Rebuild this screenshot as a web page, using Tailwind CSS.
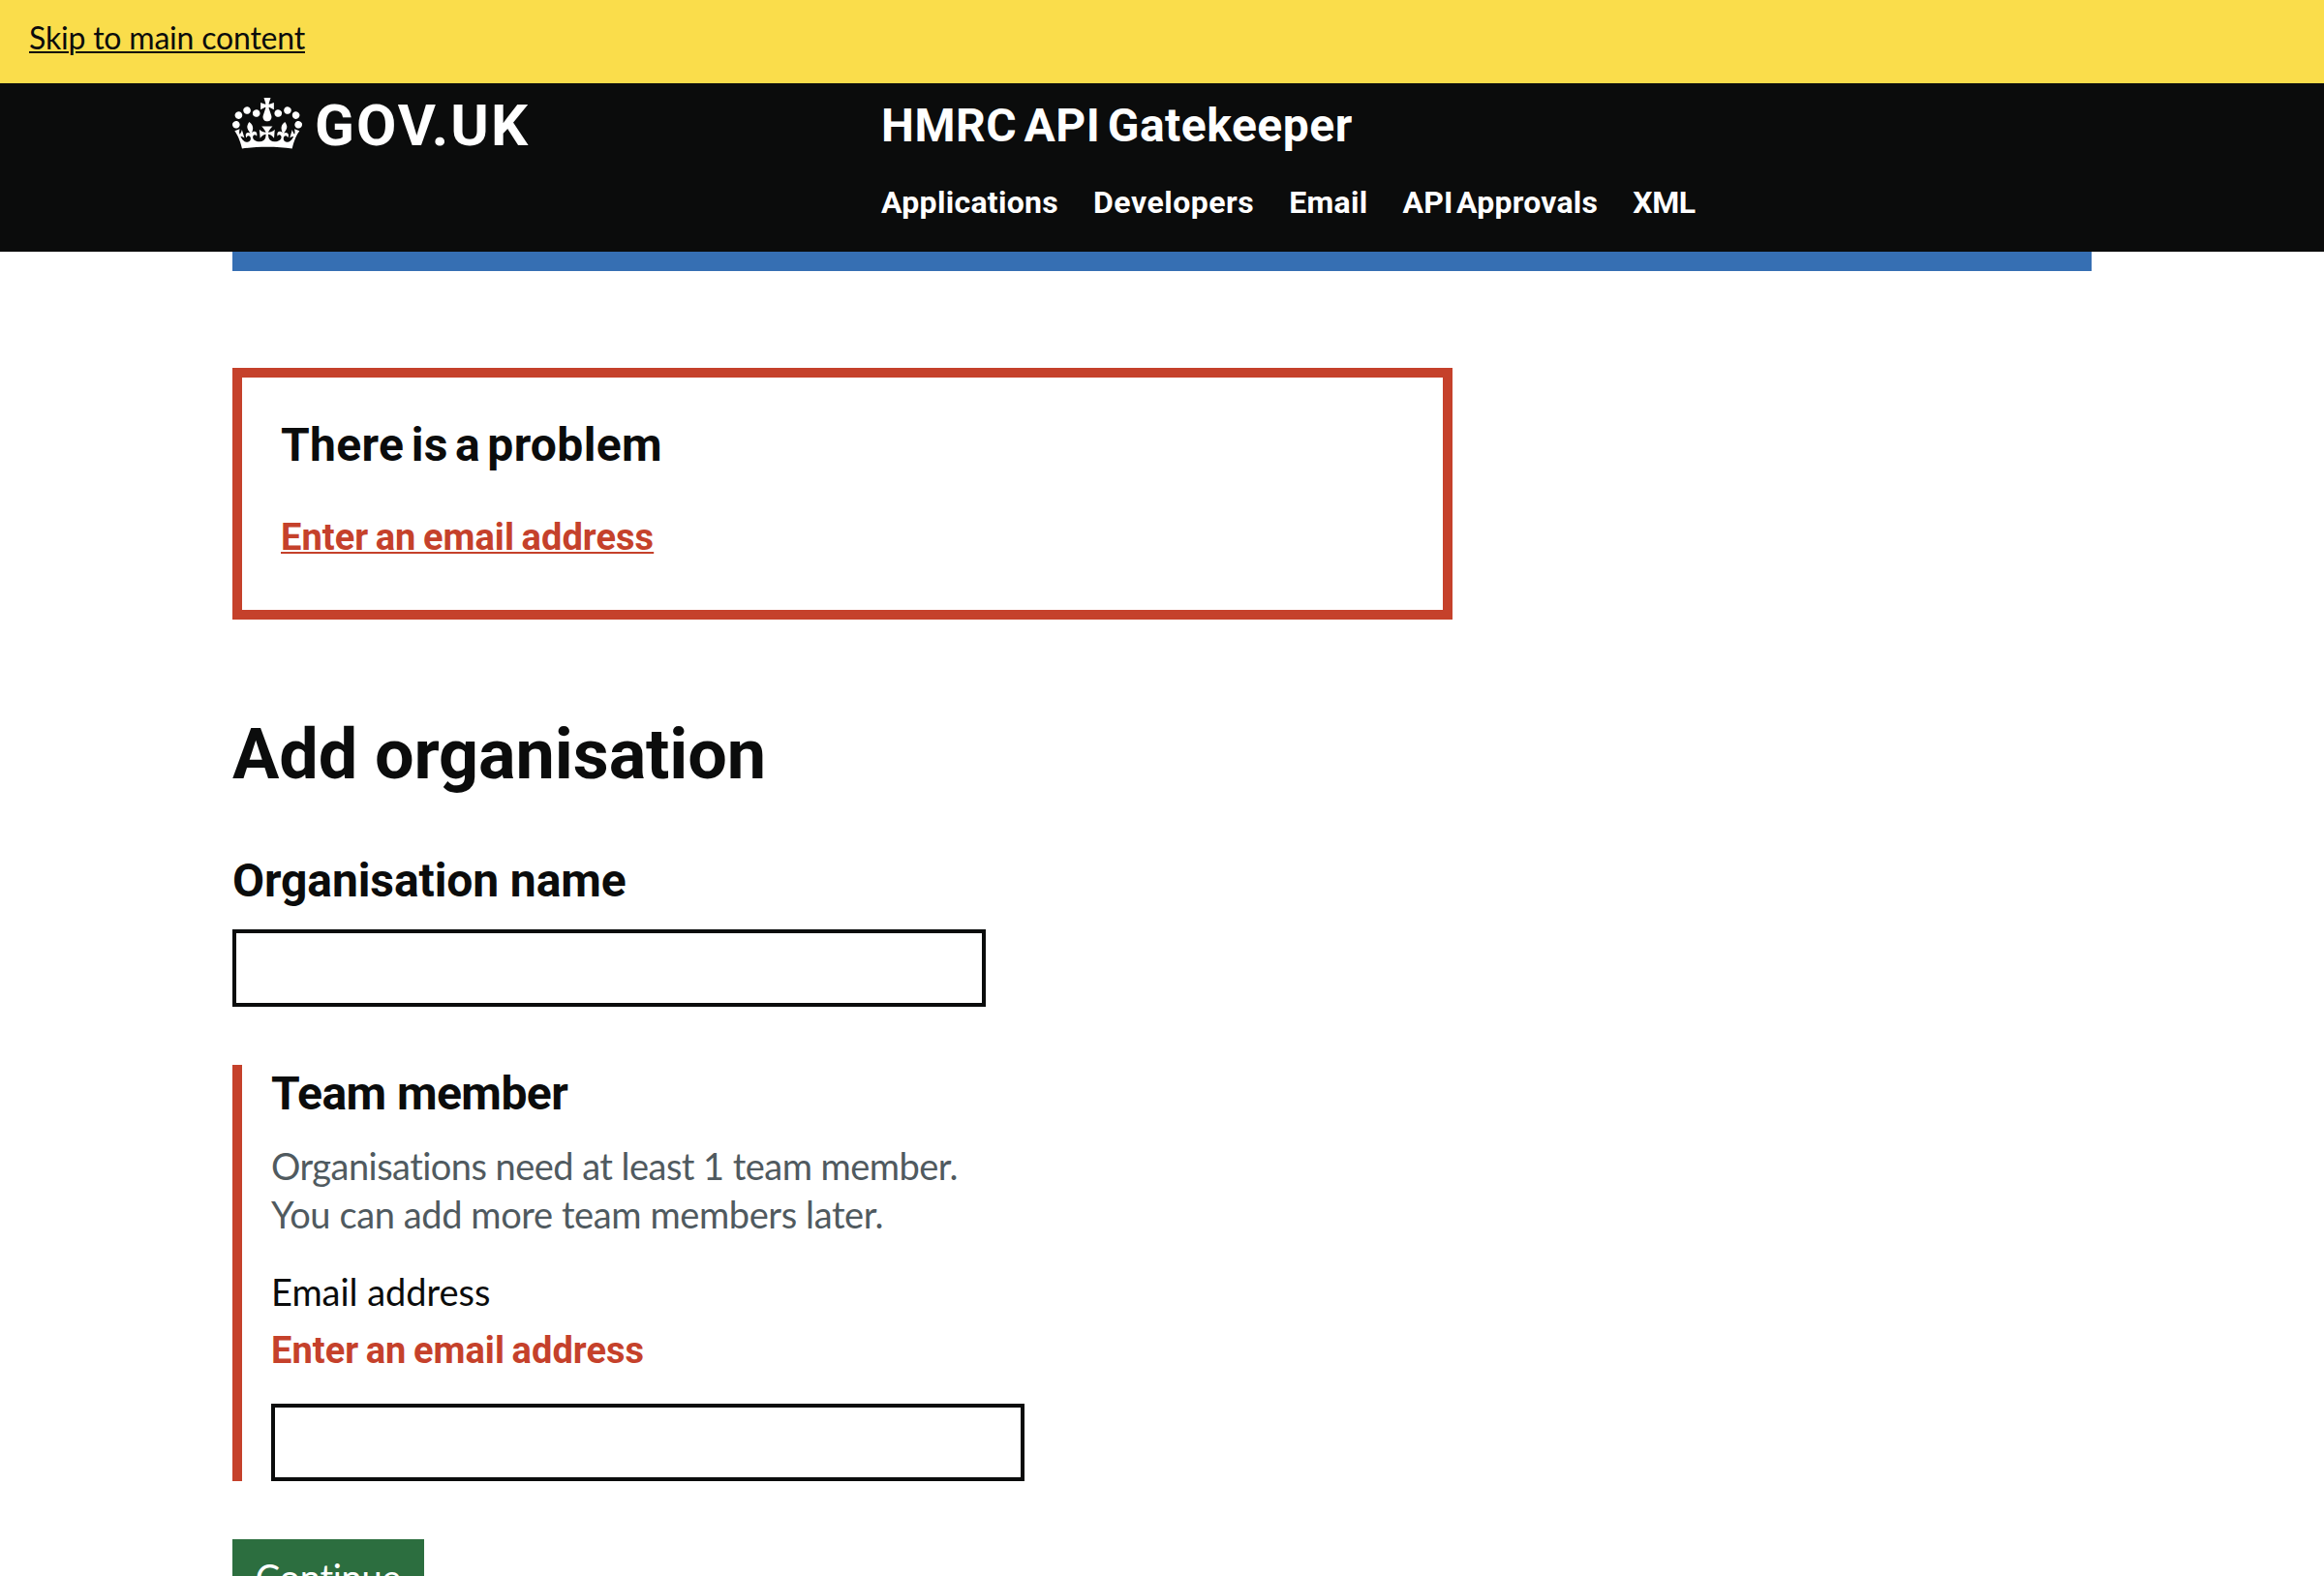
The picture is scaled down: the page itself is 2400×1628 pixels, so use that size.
<!DOCTYPE html>
<html lang="en">
<head>
<meta charset="utf-8">
<title>Add organisation - HMRC API Gatekeeper</title>
<script src="https://cdn.jsdelivr.net/npm/@tailwindcss/browser@4"></script>
</head>
<body class="h-[1628px] overflow-hidden bg-white font-['Lato',sans-serif] text-[#0b0c0c]">
  <div class="h-[86px] bg-[#fadd4b] px-[30px] pt-[19px]">
    <a href="#main" class="block w-fit text-[32px] leading-[40px] tracking-[-0.2px] underline decoration-2 underline-offset-[2px]">Skip to main content</a>
  </div>

  <header class="h-[174px] bg-[#0b0c0c] font-['Roboto',sans-serif] font-bold text-white">
    <div class="mx-auto flex w-[1920px] pt-[14px]">
      <a href="#" class="flex w-[670px] items-start">
        <svg class="mt-px h-[53px] w-[72px]" viewBox="0 0 132 97" fill="currentColor" fill-rule="evenodd" aria-hidden="true"><path d="M25 30.2c3.5 1.5 7.7-.2 9.1-3.7 1.5-3.6-.2-7.8-3.9-9.2-3.6-1.4-7.6.3-9.1 3.9-1.4 3.5.3 7.5 3.9 9zM9 39.5c3.6 1.5 7.8-.2 9.2-3.7 1.5-3.6-.2-7.8-3.9-9.1-3.6-1.5-7.6.2-9.1 3.8-1.4 3.5.3 7.5 3.8 9zM4.4 57.2c3.5 1.5 7.7-.2 9.1-3.8 1.5-3.6-.2-7.7-3.9-9.1-3.5-1.5-7.6.3-9.1 3.8-1.4 3.5.3 7.6 3.9 9.1zm38.3-21.4c3.5 1.5 7.7-.2 9.1-3.8 1.5-3.6-.2-7.7-3.9-9.1-3.6-1.5-7.6.3-9.1 3.8-1.3 3.6.4 7.7 3.9 9.1zm64.4-5.6c-3.6 1.5-7.8-.2-9.1-3.7-1.5-3.6.2-7.8 3.8-9.2 3.6-1.4 7.7.3 9.2 3.9 1.3 3.5-.4 7.5-3.9 9zm15.9 9.3c-3.6 1.5-7.7-.2-9.1-3.7-1.5-3.6.2-7.8 3.7-9.1 3.6-1.5 7.7.2 9.2 3.8 1.5 3.5-.3 7.5-3.8 9zm4.7 17.7c-3.6 1.5-7.8-.2-9.2-3.8-1.5-3.6.2-7.7 3.9-9.1 3.6-1.5 7.7.3 9.2 3.8 1.3 3.5-.4 7.6-3.9 9.1zM89.3 35.8c-3.6 1.5-7.8-.2-9.2-3.8-1.4-3.6.2-7.7 3.9-9.1 3.6-1.5 7.7.3 9.2 3.8 1.4 3.6-.3 7.7-3.9 9.1zM69.7 17.7l8.9 4.7V9.3l-8.9 2.8c-.2-.3-.5-.6-.9-.9L72.4 0H59.6l3.5 11.2c-.3.3-.6.5-.9.9l-8.8-2.8v13.1l8.8-4.7c.3.3.6.7.9.9l-5 15.4v.1c-.2.8-.4 1.6-.4 2.4 0 4.1 3.1 7.5 7 8.1h.2c.3 0 .7.1 1 .1.4 0 .7 0 1-.1h.2c4-.6 7.1-4.1 7.1-8.1 0-.8-.1-1.7-.4-2.4V34l-5.1-15.4c.4-.2.7-.6 1-.9zM66 92.8c16.9 0 32.8 1.1 47.1 3.2 4-16.9 8.9-26.7 14-33.5l-9.6-3.4c1 4.9 1.1 7.2 0 10.2-1.5-1.4-3-4.3-4.2-8.7L108.6 76c2.8-2 5-3.2 7.5-3.3-4.4 9.4-10 11.9-13.6 11.2-4.3-.8-6.3-4.6-5.6-7.9 1-4.7 5.7-5.9 8-.5 4.3-8.7-3-11.4-7.6-8.8 7.1-7.2 7.9-13.5 2.1-21.1-8 6.1-8.1 12.3-4.5 20.8-4.7-5.4-12.1-2.5-9.5 6.2 3.4-5.2 7.9-2 7.2 3.1-.6 4.3-6.4 7.8-13.5 7.2-10.3-.9-10.9-8-11.2-13.8 2.5-.5 7.1 1.8 11 7.3L80.2 60c-4.1 4.4-8 5.3-12.3 5.4 1.4-4.4 8-11.6 8-11.6H55.5s6.4 7.2 7.9 11.6c-4.2-.1-8-1-12.3-5.4l1.4 16.4c3.9-5.5 8.5-7.7 10.9-7.3-.3 5.8-.9 12.8-11.1 13.8-7.2.6-12.9-2.9-13.5-7.2-.7-5 3.8-8.3 7.1-3.1 2.7-8.7-4.6-11.6-9.4-6.2 3.7-8.5 3.6-14.7-4.6-20.8-5.8 7.6-5 13.9 2.2 21.1-4.7-2.6-11.9.1-7.7 8.8 2.3-5.5 7.1-4.2 8.1.5.7 3.3-1.3 7.1-5.7 7.9-3.5.7-9-1.8-13.5-11.2 2.5.1 4.7 1.3 7.5 3.3l-4.7-15.4c-1.2 4.4-2.7 7.2-4.3 8.7-1.1-3-.9-5.3 0-10.2l-9.5 3.4c5 6.9 9.9 16.7 14 33.5 14.8-2.1 30.8-3.2 47.7-3.2z"/></svg>
        <span class="ml-[13px] text-[60px] leading-[60px] tracking-[2.1px]">GOV.UK</span>
      </a>
      <div>
        <a href="#" class="block w-fit text-[48px] leading-[60px] tracking-[0.5px] [word-spacing:-5px]">HMRC API Gatekeeper</a>
        <nav class="mt-[29px] flex gap-[36px] text-[32px] leading-[40px]">
          <a href="#" class="tracking-[0.3px]">Applications</a>
          <a href="#" class="tracking-[0.5px]">Developers</a>
          <a href="#" class="tracking-[0.3px]">Email</a>
          <a href="#" class="tracking-[0.25px] [word-spacing:-5px]">API Approvals</a>
          <a href="#" class="tracking-[-0.4px]">XML</a>
        </nav>
      </div>
    </div>
  </header>

  <div class="mx-auto w-[1920px]">
    <div class="h-[20px] bg-[#366fb3]"></div>
    <main id="main" class="flex flex-col items-start pt-[100px]">
      <div class="h-[260px] w-[1260px] border-[10px] border-[#c5412b] p-[40px] font-['Roboto',sans-serif] font-bold">
        <h2 class="text-[48px] leading-[60px] tracking-[0.35px] [word-spacing:-5px]">There is a problem</h2>
        <a href="#email" class="mt-[40px] block w-fit text-[38px] leading-[50px] tracking-[0.05px] [word-spacing:-2px] text-[#c5412b] underline decoration-2 underline-offset-[2px]">Enter an email address</a>
      </div>

      <h1 class="mt-[100px] font-['Roboto',sans-serif] text-[72px] leading-[80px] font-bold tracking-[-0.1px]">Add organisation</h1>

      <label for="org" class="mt-[60px] font-['Roboto',sans-serif] text-[48px] leading-[60px] font-bold tracking-[-0.1px]">Organisation name</label>
      <input id="org" type="text" class="mt-[20px] h-[80px] w-[778px] border-4 border-[#0b0c0c]">

      <div class="mt-[60px] flex h-[430px] flex-col items-start border-l-[10px] border-[#c5412b] pl-[30px]">
        <h2 class="font-['Roboto',sans-serif] text-[48px] leading-[60px] font-bold tracking-[-0.55px]">Team member</h2>
        <div class="mt-[19px] text-[38px] leading-[50px] text-[#505a5f]">
          <p class="tracking-[-0.54px]">Organisations need at least 1 team member.</p>
          <p class="tracking-[-0.4px]">You can add more team members later.</p>
        </div>
        <label for="email" class="mt-[30px] text-[38px] leading-[50px] tracking-[-0.03px]">Email address</label>
        <p class="mt-[11px] font-['Roboto',sans-serif] text-[38px] leading-[50px] font-bold tracking-[0.05px] [word-spacing:-2px] text-[#c5412b]">Enter an email address</p>
        <input id="email" type="text" class="mt-[30px] h-[80px] w-[778px] border-4 border-[#0b0c0c]">
      </div>

      <button class="mt-[60px] h-[76px] w-[198px] bg-[#2c6e3f] pb-[12px] pt-[14px] text-[38px] leading-[50px] tracking-[-0.3px] text-white">Continue</button>
    </main>
  </div>
</body>
</html>
